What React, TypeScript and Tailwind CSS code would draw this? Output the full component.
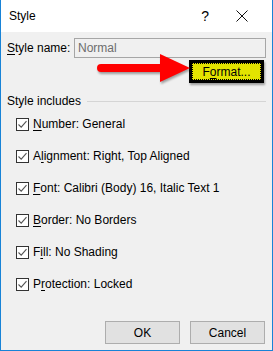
import React from "react";

const items = [
  { key: "N", rest: "umber: General" },
  { pre: "A", key: "l", rest: "ignment: Right, Top Aligned" },
  { key: "F", rest: "ont: Calibri (Body) 16, Italic Text 1" },
  { key: "B", rest: "order: No Borders" },
  { pre: "F", key: "i", rest: "ll: No Shading" },
  { pre: "P", key: "r", rest: "otection: Locked" },
];

function Check() {
  return (
    <span className="flex h-[13px] w-[13px] items-center justify-center border border-[#333] bg-white">
      <svg width="11" height="11" viewBox="0 0 11 11">
        <path d="M1.5 5.5 L4.2 8.2 L9.5 2.2" fill="none" stroke="#555" strokeWidth="1.1" />
      </svg>
    </span>
  );
}

export default function App() {
  return (
    <div
      className="flex h-[351px] w-[273px] flex-col border-x border-b border-[#1883d7] bg-[#f0f0f0] text-[12px] text-black"
      style={{ fontFamily: '"Liberation Sans", Arial, sans-serif' }}
    >
      {/* title bar */}
      <div className="flex h-[32px] items-center bg-white pl-[8px]">
        <span className="text-[12px]">Style</span>
        <span className="ml-auto mr-[27px] text-[14px] leading-none">?</span>
        <svg width="12" height="12" viewBox="0 0 12 12" className="mr-[24px]">
          <path d="M0.5 0.5 L11.5 11.5 M11.5 0.5 L0.5 11.5" stroke="#111" strokeWidth="1" />
        </svg>
      </div>

      <div className="flex flex-1 flex-col px-[6px]">
        {/* style name */}
        <div className="mt-[6px] flex h-[20px] items-center">
          <span className="w-[67px]">
            <u className="underline-offset-2">S</u>tyle name:
          </span>
          <div className="flex h-[20px] flex-1 items-center border border-[#a6a6a6] bg-[#f0f0f0] pl-[3px] text-[#6d6d6d]">
            Normal
          </div>
        </div>

        {/* format button with arrow */}
        <div className="relative mt-[2px] flex h-[23px] justify-end pr-[2px]">
          <svg
            width="96"
            height="32"
            viewBox="0 0 96 32"
            className="absolute left-[90px] top-[-6px]"
            style={{ filter: "drop-shadow(1px 2px 1px rgba(0,0,0,0.35))" }}
          >
            <path
              d="M4 10 L63 10 L63 0 L93 14 L63 28 L63 18 L4 18 A4 4 0 0 1 4 10 Z"
              fill="#ff0000"
            />
          </svg>
          <div className="flex h-[23px] w-[75px] items-center justify-center border-[3px] border-black bg-[#e3e300] shadow-[1px_2px_2px_rgba(0,0,0,0.35)]">
            <div className="flex h-full w-full items-center justify-center border border-dotted border-black">
              F<u className="underline-offset-2">o</u>rmat...
            </div>
          </div>
        </div>

        {/* style includes */}
        <div className="mt-[11px] flex h-[14px] items-center">
          <span>Style includes</span>
          <div className="ml-[6px] h-px flex-1 bg-[#d5d5d5]" />
        </div>

        <div className="flex flex-col pl-[9px]">
          {items.map((it, i) => (
            <div key={i} className="flex h-[32px] items-center gap-[4px]">
              <Check />
              <span>
                {it.pre}
                <u className="underline-offset-2">{it.key}</u>
                {it.rest}
              </span>
            </div>
          ))}
        </div>

        {/* buttons */}
        <div className="mt-auto mb-[6px] flex justify-end gap-[10px] pr-[1px]">
          <button className="flex h-[23px] w-[75px] items-center justify-center border border-[#adadad] bg-[#e1e1e1]">
            OK
          </button>
          <button className="flex h-[23px] w-[75px] items-center justify-center border border-[#adadad] bg-[#e1e1e1]">
            Cancel
          </button>
        </div>
      </div>
    </div>
  );
}
